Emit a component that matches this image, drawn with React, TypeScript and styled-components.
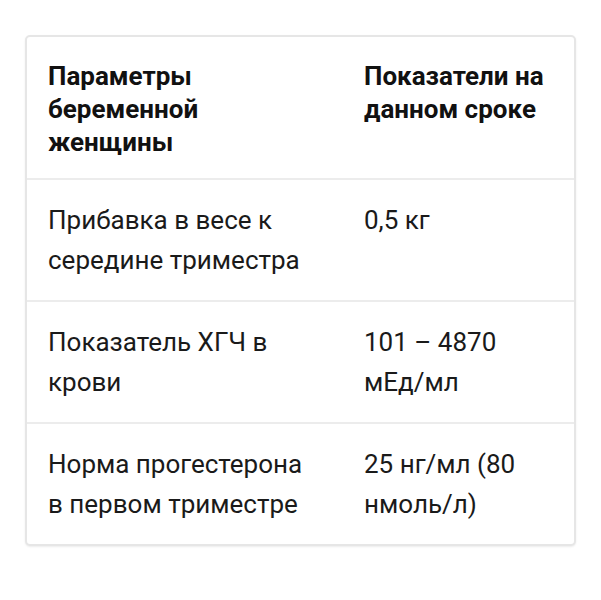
import styled, { createGlobalStyle } from "styled-components";

const GlobalStyle = createGlobalStyle`
  body {
    margin: 0;
    background: #ffffff;
    font-family: Roboto, "Noto Sans", sans-serif;
  }
`;

const Page = styled.div`
  padding: 35px 25px;
`;

const Card = styled.div`
  border: 2px solid #e6e6e6;
  border-radius: 5px;
  box-shadow: 0 1px 2px rgba(0, 0, 0, 0.08);
  background: #ffffff;
  overflow: hidden;
`;

const Row = styled.div<{ $last?: boolean }>`
  display: grid;
  grid-template-columns: 316px 1fr;
  border-bottom: ${(p) => (p.$last ? "none" : "2px solid #ececec")};
`;

const HeadCell = styled.div`
  padding: 23px 21px 19px;
  font-size: 26px;
  font-weight: 700;
  line-height: 33px;
  color: #111111;

  &:first-child {
    padding-right: 30px;
  }
`;

const Cell = styled.div`
  padding: 20px 21px;
  font-size: 26px;
  line-height: 40px;
  color: #1a1a1a;

  &:first-child {
    padding-right: 30px;
  }
`;

const rows = [
  ["Прибавка в весе к середине триместра", "0,5 кг"],
  ["Показатель ХГЧ в крови", "101 – 4870 мЕд/мл"],
  ["Норма прогестерона в первом триместре", "25 нг/мл (80 нмоль/л)"],
];

const App: React.FC = () => {
  return (
    <Page>
      <GlobalStyle />
      <Card>
        <Row>
          <HeadCell>Параметры беременной женщины</HeadCell>
          <HeadCell>Показатели на данном сроке</HeadCell>
        </Row>
        {rows.map(([name, value], i) => (
          <Row key={name} $last={i === rows.length - 1}>
            <Cell>{name}</Cell>
            <Cell>{value}</Cell>
          </Row>
        ))}
      </Card>
    </Page>
  );
};

export default App;
